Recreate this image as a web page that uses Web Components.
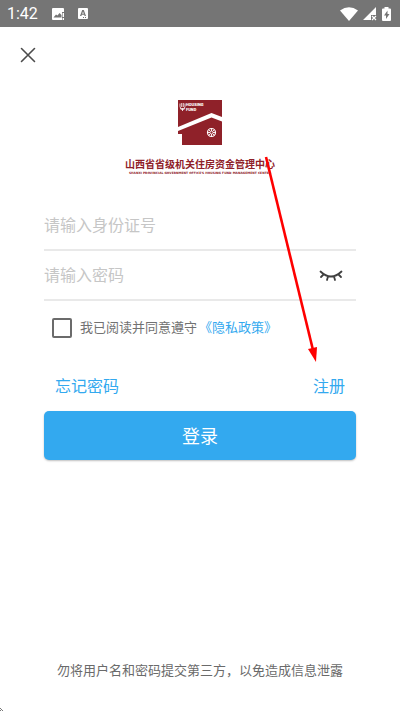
<!DOCTYPE html>
<html lang="zh-CN">
<head>
<meta charset="UTF-8">
<meta name="viewport" content="width=device-width, initial-scale=1">
<title>登录</title>
<style>
  body {
    margin: 0;
    background: #fff;
    font-family: Roboto, "Noto Sans CJK SC", sans-serif;
    --blue: #33a9ef;
    --red: #8f2129;
  }
</style>
</head>
<body>
<login-page></login-page>

<script>
  // Base: puts the markup of the class in an open shadow root
  class BaseElement extends HTMLElement {
    constructor() {
      super();
      this.attachShadow({ mode: "open" });
    }
    connectedCallback() {
      this.shadowRoot.innerHTML = this.render();
    }
  }

  // Android status bar
  class StatusBar extends BaseElement {
    render() {
      return `
      <style>
        :host {
          display: flex;
          align-items: center;
          height: 27px;
          padding: 0 6px 0 7px;
          background: #757575;
          color: #fff;
          box-sizing: border-box;
        }
        span { font-size: 16px; line-height: 20px; margin-right: 13px; }
        svg { display: block; fill: #fff; }
        .note { margin-right: 12px; }
        .right { display: flex; align-items: center; gap: 5px; margin-left: auto; }
      </style>
      <span>1:42</span>
      <svg class="note" width="14" height="14" viewBox="0 0 14 14">
        <path fill-rule="evenodd" d="M2 1h10q1 0 1 1v3h-2v8H2q-1 0-1-1V2q0-1 1-1zM2.500 10.500h8V8L8.500 6 6.500 8.500 5 7.500z"/>
        <path d="M11.600 6h1.400v4h-1.400zM11.600 11h1.400v2h-1.400z"/>
      </svg>
      <svg width="12" height="13" viewBox="0 0 12 13">
        <path fill-rule="evenodd" d="M2 1h8q1 0 1 1v9q0 1-1 1H2q-1 0-1-1V2q0-1 1-1zM5.200 3L3 9h1.400l.4-1.200h2.400L7.600 9H9L6.800 3zM6 4.500l.8 2.200H5.200zM6 10v1h1v-1zM8 10v1h1v-1z"/>
      </svg>
      <div class="right">
        <svg width="18" height="14" viewBox="0 0 18 14"><path d="M0 3.500Q9-3 18 3.500L9 14z"/></svg>
        <svg width="14" height="14" viewBox="0 0 14 14">
          <path d="M13 0v8H8v5H0z"/>
          <path d="M9 9l4 4M13 9l-4 4" stroke="#fff" stroke-width="1.200"/>
        </svg>
        <svg width="12" height="16" viewBox="3 0 12 16">
          <path fill-rule="evenodd" d="M5.500 1h4v1.500H11q1 0 1 1V14q0 1-1 1H4q-1 0-1-1V3.500q0-1 1-1h1.500zM8.500 4.500L5 9.500h2V13l3.500-5h-2z"/>
        </svg>
      </div>`;
    }
  }

  // Top bar with the close button
  class NavBar extends BaseElement {
    render() {
      return `
      <style>
        :host { display: flex; align-items: center; height: 56px; padding: 0 16px; }
        button { padding: 4px; border: 0; background: none; cursor: pointer; }
        svg { display: block; }
      </style>
      <button type="button" aria-label="关闭">
        <svg width="16" height="16" viewBox="0 0 16 16" stroke="#4c4c4c" stroke-width="1.600" stroke-linecap="round">
          <path d="M1.500 1.500l13 13M14.500 1.500l-13 13"/>
        </svg>
      </button>`;
    }
  }

  // Logo of the housing fund centre, the name goes in the slots
  class BrandLogo extends BaseElement {
    render() {
      return `
      <style>
        :host {
          display: flex;
          flex-direction: column;
          align-items: center;
          padding: 17px 0 26px;
          color: var(--red);
        }
        svg { display: block; margin-bottom: 13px; }
        h1 { margin: 0; font-size: 10px; line-height: 13px; font-weight: 700; white-space: nowrap; }
        p {
          margin: 0;
          font-family: "DejaVu Sans", sans-serif;
          font-size: 3px;
          line-height: 4px;
          font-weight: 700;
          white-space: nowrap;
        }
        text { font-size: 4px; font-weight: 900; fill: #fff; }
      </style>
      <svg width="46" height="45" viewBox="0 0 46 45">
        <path fill="#8f2129" d="M1 0h44v17L34.500 13 1 27z"/>
        <path fill="#8f2129" d="M1 31L34.500 17.500 45 21.500V45H5V34H1z"/>
        <g fill="none" stroke="#fff">
          <path stroke-width=".8" d="M3 3.500v3a2.500 2.500 0 0 0 5 0v-3M4.700 3v4M6.300 3v4M3 8.500q2.500 2.500 5 0M5.500 8v3"/>
          <circle cx="34.500" cy="32.500" r="4" stroke-width="1.200"/>
          <path stroke-width=".9" d="M34.500 28.500v2.500M34.500 34v2.500M30.500 32.500H33M36 32.500h2.500M32 30l1.200 1.200M37 30l-1.200 1.200M32 35l1.200-1.200M37 35l-1.200-1.200"/>
          <circle cx="34.500" cy="32.500" r="1.500" stroke-width=".9"/>
        </g>
        <text x="9" y="6">HOUSING</text>
        <text x="9" y="11">FUND</text>
      </svg>
      <h1><slot></slot></h1>
      <p><slot name="en"></slot></p>`;
    }
  }

  // Text field with a line under it, the slot takes an icon button
  class TextField extends BaseElement {
    render() {
      const type = this.getAttribute("type") || "text";
      const hint = this.getAttribute("hint");
      return `
      <style>
        :host {
          display: flex;
          align-items: center;
          height: 50px;
          padding-top: 2px;
          box-sizing: border-box;
          border-bottom: 2px solid #e9e9e9;
        }
        input {
          flex: 1;
          min-width: 0;
          padding: 0;
          border: 0;
          outline: 0;
          background: none;
          font: inherit;
          font-size: 16px;
          line-height: 24px;
          color: #333;
        }
        input::placeholder { color: #c6c6c6; opacity: 1; }
      </style>
      <input type="${type}" placeholder="${hint}" aria-label="${hint}">
      <slot></slot>`;
    }
  }

  // Closed eye, shows or hides the password
  class EyeToggle extends BaseElement {
    render() {
      return `
      <style>
        :host { display: block; padding-right: 9px; }
        button { display: block; padding: 4px; border: 0; background: none; cursor: pointer; }
        svg { display: block; }
      </style>
      <button type="button" aria-label="显示密码">
        <svg width="24" height="14" viewBox="0 0 24 14" fill="none" stroke="#3f3f3f" stroke-width="1.800" stroke-linecap="round">
          <path d="M1.500 2.500Q12 12.500 22.500 2.500M4.500 5.500L2 8M9 7.500L8 11M15 7.500l1 3.500M19.500 5.500L22 8"/>
        </svg>
      </button>`;
    }
    connectedCallback() {
      super.connectedCallback();
      this.shadowRoot.querySelector("button").addEventListener("click", () => {
        const input = this.parentElement.shadowRoot.querySelector("input");
        input.type = input.type === "password" ? "text" : "password";
      });
    }
  }

  // Tick box with the agreement text
  class AgreeCheck extends BaseElement {
    render() {
      return `
      <style>
        :host {
          display: flex;
          align-items: center;
          padding: 17px 8px 18px;
          font-size: 13px;
          line-height: 20px;
          color: #727272;
        }
        input {
          appearance: none;
          width: 20px;
          height: 20px;
          margin: 0 8px 0 0;
          border: 2px solid #6b6b6b;
          border-radius: 2px;
        }
        input:checked { background: var(--blue); }
        label { margin-right: 2px; }
        a { color: var(--blue); text-decoration: none; }
      </style>
      <input type="checkbox" id="agree">
      <label for="agree">我已阅读并同意遵守</label>
      <a href="#privacy">《隐私政策》</a>`;
    }
  }

  // Links over the login button
  class AccountLinks extends BaseElement {
    render() {
      return `
      <style>
        :host {
          display: flex;
          justify-content: space-between;
          padding: 21px 11px 14px;
          font-size: 16px;
          line-height: 20px;
        }
        a { color: var(--blue); text-decoration: none; }
      </style>
      <a href="#forgot">忘记密码</a>
      <a href="#register">注册</a>`;
    }
  }

  class PrimaryButton extends BaseElement {
    render() {
      return `
      <style>
        :host { display: block; }
        button {
          display: block;
          width: 100%;
          height: 49px;
          padding: 0 0 2px;
          border: 0;
          border-radius: 5px;
          background: var(--blue);
          box-shadow: 0 1px 2px rgba(0, 0, 0, 0.25);
          color: #fff;
          font: inherit;
          font-size: 18px;
          cursor: pointer;
        }
      </style>
      <button type="submit"><slot></slot></button>`;
    }
  }

  // Red arrow that points to the register link
  class HintArrow extends BaseElement {
    render() {
      return `
      <style>
        :host { display: block; pointer-events: none; }
        svg { display: block; }
      </style>
      <svg width="56" height="208" viewBox="0 0 56 208">
        <path d="M2 1L49 194" stroke="#fe0000" stroke-width="2.600"/>
        <path d="M44 193l9-2-1 15z" fill="#fe0000"/>
      </svg>`;
    }
  }

  class LoginPage extends BaseElement {
    render() {
      return `
      <style>
        :host {
          display: flex;
          flex-direction: column;
          min-height: 100vh;
          position: relative;
        }
        form { padding: 0 44px; }
        footer {
          margin-top: auto;
          padding: 20px 0 31px;
          text-align: center;
          font-size: 13px;
          line-height: 20px;
          color: #6a6a6a;
        }
        hint-arrow { position: absolute; top: 156px; right: 80px; }
        .corner { position: absolute; left: 0; bottom: 0; }
      </style>
      <status-bar></status-bar>
      <nav-bar></nav-bar>
      <brand-logo>山西省省级机关住房资金管理中心<span slot="en">SHANXI PROVINCIAL GOVERNMENT OFFICE'S HOUSING FUND MANAGEMENT CENTER</span></brand-logo>
      <form>
        <text-field hint="请输入身份证号"></text-field>
        <text-field type="password" hint="请输入密码"><eye-toggle></eye-toggle></text-field>
        <agree-check></agree-check>
        <account-links></account-links>
        <primary-button>登录</primary-button>
      </form>
      <footer>勿将用户名和密码提交第三方，以免造成信息泄露</footer>
      <hint-arrow></hint-arrow>
      <svg class="corner" width="4" height="4" viewBox="0 0 4 4"><path fill="#777" d="M0 0h1v1H0zM1 1h1v1H1zM0 2h1v1H0zM2 2h1v1H2z"/></svg>`;
    }
  }

  customElements.define("status-bar", StatusBar);
  customElements.define("nav-bar", NavBar);
  customElements.define("brand-logo", BrandLogo);
  customElements.define("text-field", TextField);
  customElements.define("eye-toggle", EyeToggle);
  customElements.define("agree-check", AgreeCheck);
  customElements.define("account-links", AccountLinks);
  customElements.define("primary-button", PrimaryButton);
  customElements.define("hint-arrow", HintArrow);
  customElements.define("login-page", LoginPage);
</script>
</body>
</html>
